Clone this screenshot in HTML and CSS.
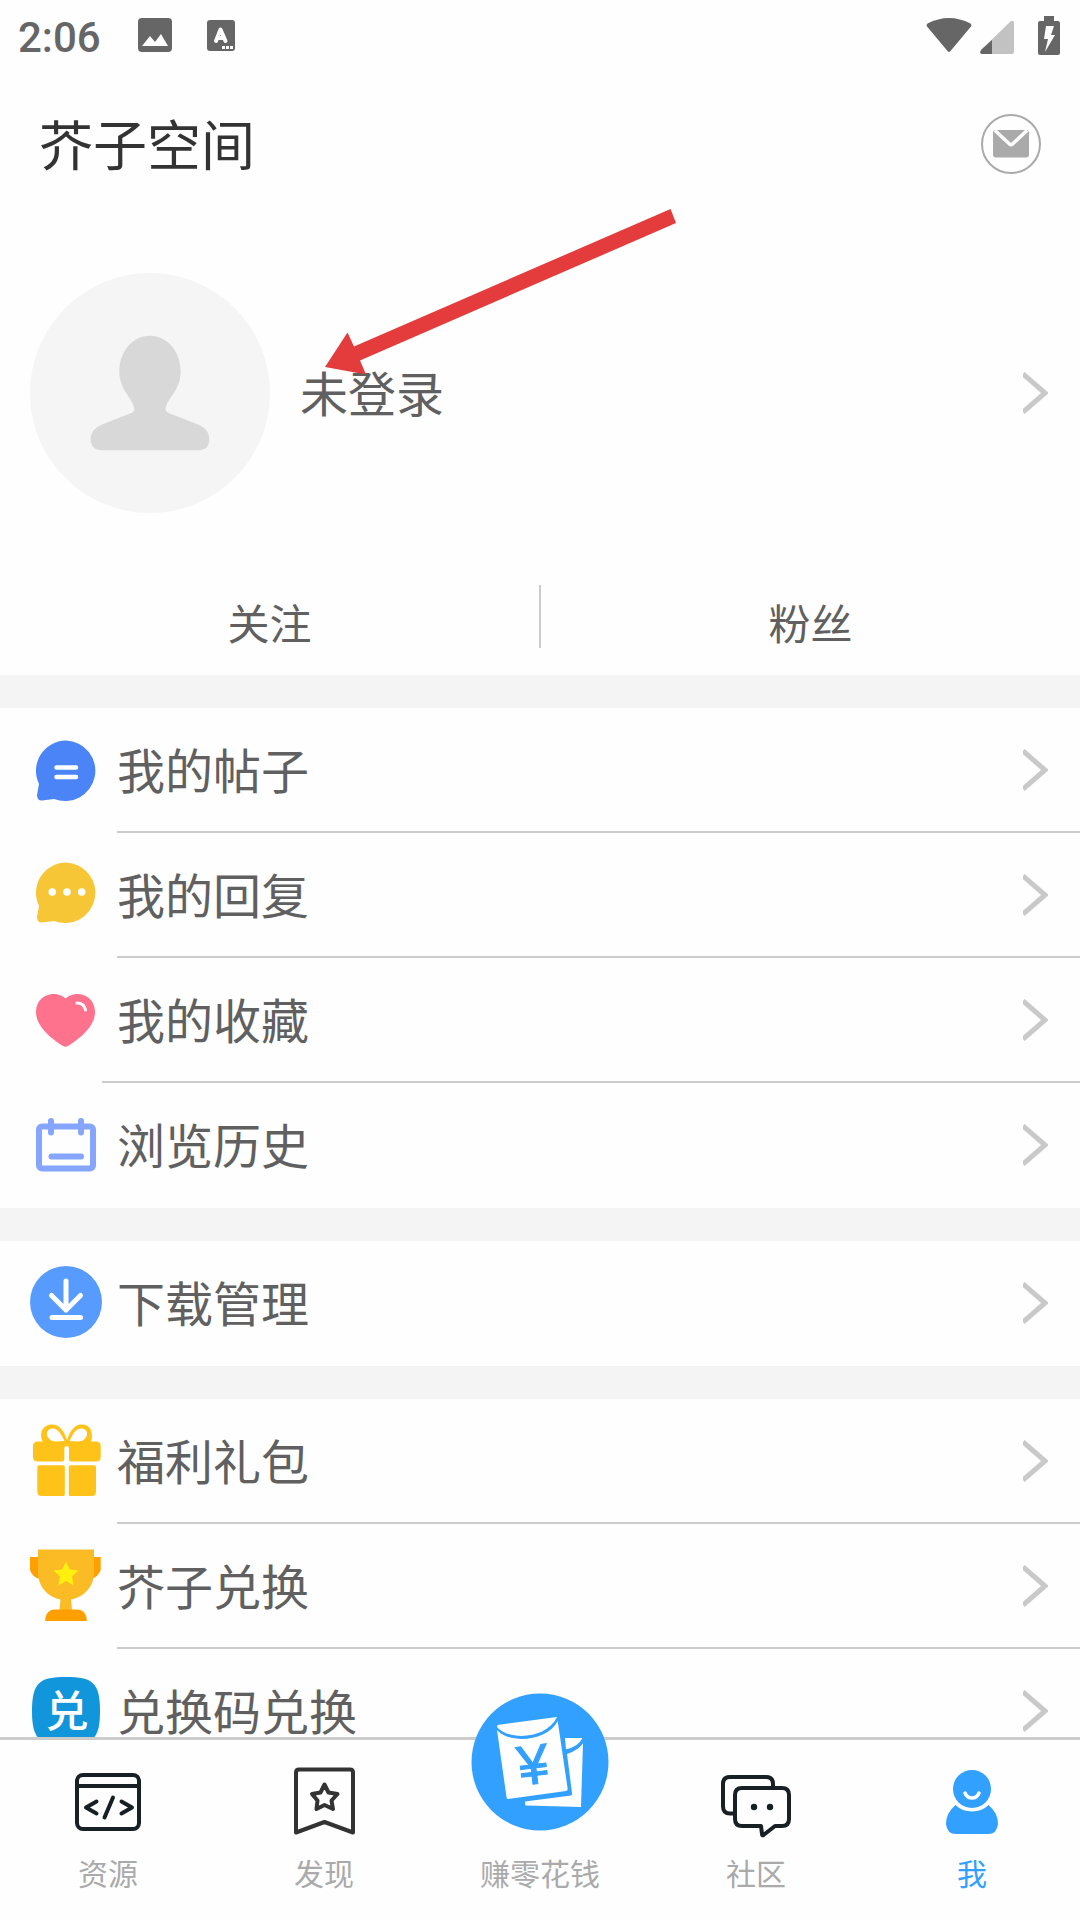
FILE: index.html
```html
<!DOCTYPE html>
<html lang="zh-CN">
<head>
<meta charset="utf-8">
<meta name="viewport" content="width=device-width, initial-scale=1">
<title>芥子空间</title>
<link rel="stylesheet" href="styles.css">
</head>
<body>
<svg class="defs" aria-hidden="true">
  <symbol id="chevron" viewBox="0 0 25 42"><path d="M0 2L22 21L0 40" fill="none" stroke="#c9c9c9" stroke-width="5"/></symbol>
  <symbol id="bubble" viewBox="0 0 72 72"><path d="M36 4.500A30.300 30.300 0 1 1 24 63L12 64.500Q7 64.500 7 59L9 48A30.300 30.300 0 0 1 36 4.500Z"/></symbol>
</svg>
<div class="app">
  <div class="status">
    <span class="status-time">2:06</span>
    <svg class="status-photo" width="34" height="34" viewBox="0 0 34 34"><rect width="34" height="34" rx="4" fill="#666"/><path d="M4 28L12 18L17 24L23 16L30 28Z" fill="#fefefe"/></svg>
    <svg class="status-input" width="28" height="31" viewBox="0 0 28 31"><rect width="28" height="31" rx="3" fill="#666"/><path d="M9 21L13.500 9.500L18.500 21M10.500 18H17" fill="none" stroke="#fefefe" stroke-width="4" stroke-linecap="round" stroke-linejoin="round"/><path d="M15 26h3v3h-3zM19 26h3v3h-3zM23 26h3v3h-3z" fill="#fefefe"/></svg>
    <svg class="status-wifi" width="46" height="39" viewBox="0 0 46 39"><path d="M1.500 7.500Q23-3.500 44.500 7.500Q46 9 45 10.500L24.500 35Q23 37 21.500 35L1 10.500Q0 9 1.500 7.500Z" fill="#666"/></svg>
    <svg class="status-signal" width="35" height="39" viewBox="0 0 35 39"><path d="M1 34L31 5Q34 4 34 7V36Q34 38 32 38H2Q-1 38 1 34Z" fill="#c2c2c2"/><path d="M12 24V38H2Q-1 38 1 34Z" fill="#666"/></svg>
    <svg width="22" height="39" viewBox="0 0 22 39"><path d="M6 0H16V5H20Q22 5 22 7V37Q22 39 20 39H2Q0 39 0 37V7Q0 5 2 5H6Z" fill="#666"/><path d="M8 10H16L13 19H17L7 36L10 23H6Z" fill="#fefefe"/></svg>
  </div>

  <header class="header">
    <h1 class="title">芥子空间</h1>
    <button class="mail" type="button" aria-label="消息">
      <svg width="60" height="60" viewBox="0 0 60 60"><circle cx="30" cy="30" r="29" fill="none" stroke="#aaa" stroke-width="2"/><rect x="12" y="16" width="36" height="27.500" rx="3" fill="#aaa"/><path d="M14 16.500L28.500 30Q30 31.500 31.500 30L46 16.500" fill="none" stroke="#fefefe" stroke-width="3.500"/></svg>
    </button>
  </header>

  <main class="content">
    <a class="profile" href="#profile">
      <svg width="240" height="240" viewBox="0 0 240 240"><circle cx="120" cy="120" r="120" fill="#f5f5f5"/><path d="M120 62.700C137 62.700 150.700 78 150.700 98.700C150.700 116 138 125 136 134C135 137 136 138.700 138 139.700L168 151.500C176 155 179.300 160 179.300 166Q179 177.300 168 177.300H72Q61 177.300 60.700 166C60.700 160 64 155 72 151.500L102 139.700C104 138.700 105 137 104 134C102 125 89.300 116 89.300 98.700C89.300 78 103 62.700 120 62.700Z" fill="#d8d8d8"/></svg>
      <span class="name">未登录</span>
      <svg class="chevron"><use href="#chevron"/></svg>
    </a>
    <div class="stats">
      <a class="stat" href="#following">关注</a>
      <span class="stat-line"></span>
      <a class="stat" href="#fans">粉丝</a>
    </div>

    <nav class="group">
      <a class="row" href="#posts">
        <svg class="icon" viewBox="0 0 72 72"><use href="#bubble" y="3" width="72" height="72" fill="#4b84f7"/><path d="M26.500 34.500H46M26.500 44H46" stroke="#fff" stroke-width="4.500" stroke-linecap="round"/></svg>
        <span class="row-body"><span class="label">我的帖子</span><svg class="chevron"><use href="#chevron"/></svg></span>
      </a>
      <a class="row" href="#replies">
        <svg class="icon" viewBox="0 0 72 72"><use href="#bubble" width="72" height="72" fill="#f7c637"/><g fill="#fff"><circle cx="22.300" cy="34" r="3.800"/><circle cx="37" cy="34" r="3.800"/><circle cx="51.700" cy="34" r="3.800"/></g></svg>
        <span class="row-body"><span class="label">我的回复</span><svg class="chevron"><use href="#chevron"/></svg></span>
      </a>
      <a class="row row-wide" href="#favorites">
        <svg class="icon" viewBox="0 0 72 72"><path d="M35.700 15.500C45 6.500 65 11 65 29C65 44 49 56 38 63Q35.700 64.500 33 63C22 56 6 44 6 29C6 11 26 6.500 35.700 15.500Z" fill="#ff728d"/><path d="M47 20Q54 20 55.500 27" fill="none" stroke="#fff" stroke-width="3" stroke-linecap="round"/></svg>
        <span class="row-body"><span class="label">我的收藏</span><svg class="chevron"><use href="#chevron"/></svg></span>
      </a>
      <a class="row" href="#history">
        <svg class="icon" viewBox="0 0 72 72"><g fill="none" stroke="#85a5ff" stroke-width="6" stroke-linecap="round"><rect x="9" y="18.500" width="54" height="42" rx="3"/><path d="M21 13V24.500M51 13V24.500M21.500 48.500H51"/></g></svg>
        <span class="row-body"><span class="label">浏览历史</span><svg class="chevron"><use href="#chevron"/></svg></span>
      </a>
    </nav>

    <nav class="group">
      <a class="row" href="#downloads">
        <svg class="icon" viewBox="0 0 72 72"><circle cx="36" cy="36" r="36" fill="#589bff"/><path d="M36 15V44M21.500 29.500L36 44L50.500 29.500M22 51.500H50.500" fill="none" stroke="#fff" stroke-width="5" stroke-linecap="round" stroke-linejoin="round"/></svg>
        <span class="row-body"><span class="label">下载管理</span><svg class="chevron"><use href="#chevron"/></svg></span>
      </a>
    </nav>

    <nav class="group">
      <a class="row" href="#gifts">
        <svg class="icon" viewBox="0 0 72 72"><g fill="#ffc219"><path d="M13 18C8 8 14 0 23 .5C31 1 35 10 37 16C39 10 43 1 51 .5C60 0 64 8 61 18L38 19Z"/><path d="M8 17.500H66Q70.700 17.500 70.700 22V33Q70.700 37.500 66 37.500H41Q39 37.500 39 35.500V24Q39 22 36.700 22Q34.300 22 34.300 24V35.500Q34.300 37.500 32 37.500H8Q3 37.500 3 33V22Q3 17.500 8 17.500Z"/><path d="M9 41.200H33Q34.800 41.200 34.800 43V70.500Q34.800 72 33 72H12Q7.300 72 7.300 67.500V43Q7.300 41.200 9 41.200ZM40.500 41.200H64Q66 41.200 66 43V67.500Q66 72 61.500 72H40.500Q38.800 72 38.800 70.500V43Q38.800 41.200 40.500 41.200Z"/></g><path d="M34.500 17C31 9 27 3.500 22 4.500C16 5.500 16 11 18.500 14Q21 17.500 26 17.500ZM39.500 17C43 9 47 3.500 52 4.500C58 5.500 58 11 55.500 14Q53 17.500 48 17.500Z" fill="#fefefe"/></svg>
        <span class="row-body"><span class="label">福利礼包</span><svg class="chevron"><use href="#chevron"/></svg></span>
      </a>
      <a class="row" href="#exchange">
        <svg class="icon" viewBox="0 0 72 72"><path d="M0 8H70.700V21Q68 28 61 30H10Q2 28 0 21Z" fill="#ffa000"/><path d="M8 .5H64V23C64 38 54 48 41 50.500L42 61H29.500L30.500 50.500C18 48 8 38 8 23Z" fill="#fabb24"/><path d="M15.300 72V69Q17 60.500 25 60.500H47Q55 60.500 56.700 69V72Z" fill="#ffa000"/><path d="M36 12.500L39.800 20.500L48.500 21.500L42 27.500L43.700 36.500L36 32L28.300 36.500L30 27.500L23.500 21.500L32.200 20.500Z" fill="#fff010"/></svg>
        <span class="row-body"><span class="label">芥子兑换</span><svg class="chevron"><use href="#chevron"/></svg></span>
      </a>
      <a class="row" href="#redeem">
        <svg class="icon" viewBox="0 0 72 72"><path d="M36 3C62 3 70 8 70 37S62 71 36 71S2 66 2 37S10 3 36 3Z" fill="#1296db"/><text class="icon-char" x="37" y="53" text-anchor="middle">兑</text></svg>
        <span class="row-body"><span class="label">兑换码兑换</span><svg class="chevron"><use href="#chevron"/></svg></span>
      </a>
    </nav>
  </main>

  <nav class="tabs">
    <a class="tab" href="#resources">
      <svg class="tab-icon" viewBox="0 0 72 76" fill="none" stroke="#172024" stroke-width="4" stroke-linecap="round" stroke-linejoin="round"><rect x="5" y="11" width="62" height="54" rx="6"/><path d="M5 22H67M24.500 37.500L14 43.500L24.500 49.500M49.500 37.500L60 43.500L49.500 49.500M41 33.500L32.500 53.500"/></svg>
      <span>资源</span>
    </a>
    <a class="tab" href="#discover">
      <svg class="tab-icon" viewBox="0 0 72 76" fill="none" stroke="#333" stroke-width="4" stroke-linecap="round" stroke-linejoin="round"><path d="M11 5.500H62Q65 5.500 65 8.500V68.500L36.500 58L8 68.500V8.500Q8 5.500 11 5.500Z"/><path d="M36.500 20.500L40.500 28.500L49.500 30L43.500 36.500L45 45L36.500 41L28.500 45L29.500 36.500L24 30L32.500 28.500Z"/></svg>
      <span>发现</span>
    </a>
    <a class="tab" href="#earn">
      <svg class="tab-badge" viewBox="0 0 138 138"><circle cx="69" cy="69" r="68.500" fill="#32a0ff"/><g fill="#fefefe"><path d="M26.500 32L86 24C76 46 38 48 26 34Z"/><path d="M26 37C38 51 76 49 86.700 28L96.700 96Q96.700 97.500 95 98L37 106Q35.700 106 35.500 104Z"/><path d="M94 45H111.500Q107 54 95 56.300Z"/><path d="M96 61Q108 57 112 50.300L110 114L55 112.500Q54 112.500 54 111V108.500L100 102.500Q101.300 102 101 100Z"/></g><text class="yen" x="62" y="91" text-anchor="middle" transform="rotate(-7 61 71)">¥</text></svg>
      <span>赚零花钱</span>
    </a>
    <a class="tab" href="#community">
      <svg class="tab-icon" viewBox="0 0 72 76" fill="none" stroke="#172024" stroke-width="4" stroke-linecap="round" stroke-linejoin="round"><path d="M13 49.500H10Q3 49.500 3 42.500V20Q3 13 10 13H46Q53 13 53 20V24"/><path d="M22 24H62Q69 24 69 31V55Q69 62 62 62H55L43.500 71Q42 72 42 70L41 62H22Q15 62 15 55V31Q15 24 22 24Z"/><g fill="#172024" stroke="none"><circle cx="34" cy="43" r="3.200"/><circle cx="50" cy="43" r="3.200"/></g></svg>
      <span>社区</span>
    </a>
    <a class="tab tab-active" href="#me">
      <svg class="tab-icon" viewBox="0 0 72 76"><circle cx="36" cy="25" r="19" fill="#32a0ff"/><path d="M29 29Q31 34 36 34T43 29" fill="none" stroke="#fefefe" stroke-width="3.500" stroke-linecap="round"/><path d="M19.500 41Q26 47.500 36 47.500T52.500 41Q62 49 62 60Q61 70 52 70H20Q11 70 10 60Q10 49 19.500 41Z" fill="#32a0ff"/></svg>
      <span>我</span>
    </a>
  </nav>

  <svg class="pointer" viewBox="0 0 352 166" aria-hidden="true"><path d="M0 158L22.500 123.500L29 137.500L345.500 0L351 14L35 151.500L41 165.500Z" fill="#e43c3c"/></svg>
</div>
</body>
</html>
```
FILE: styles.css
```css
* {
  box-sizing: border-box;
}

body {
  margin: 0;
  background: #fefefe;
  color: #606060;
  font-family: "Noto Sans CJK SC", "Noto Sans", sans-serif;
  font-size: 48px;
}

a {
  color: inherit;
  text-decoration: none;
}

svg {
  display: block;
  flex: none;
}

.defs {
  position: absolute;
  width: 0;
  height: 0;
}

.app {
  position: relative;
  display: flex;
  flex-direction: column;
  height: 100vh;
  overflow: hidden;
}

/* Status bar */
.status {
  flex: none;
  display: flex;
  align-items: center;
  height: 72px;
  padding: 0 20px 2px 18px;
}

.status-time {
  padding-top: 5px;
  color: #666;
  font: 500 42px/48px Roboto, sans-serif;
}

.status-photo {
  margin-left: 37px;
}

.status-input {
  margin-left: 35px;
}

.status-wifi {
  margin-left: auto;
}

.status-signal {
  margin: 0 23px 0 8px;
}

/* Title bar */
.header {
  flex: none;
  display: flex;
  align-items: center;
  justify-content: space-between;
  height: 144px;
  padding: 0 39px;
}

.title {
  margin: 0;
  padding-bottom: 2px;
  color: #333;
  font-size: 54px;
  font-weight: 400;
  line-height: 72px;
}

.mail {
  padding: 0;
  border: 0;
  background: none;
}

/* Scrolling content */
.content {
  flex: 1;
  min-height: 0;
  overflow-y: auto;
  scrollbar-width: none;
}

.profile {
  display: flex;
  align-items: center;
  gap: 30px;
  padding: 57px 32px 45px 30px;
}

.name {
  flex: 1;
  padding-bottom: 5px;
}

.chevron {
  width: 25px;
  height: 42px;
}

.stats {
  display: flex;
  align-items: center;
  height: 117px;
  font-size: 42px;
}

.stat {
  flex: 1;
  padding-top: 10px;
  text-align: center;
}

.stat-line {
  width: 2px;
  height: 63px;
  background: #ccc;
}

.group {
  border-top: 33px solid #f4f4f4;
}

.row {
  display: flex;
  align-items: stretch;
  height: 125px;
  padding-left: 30px;
}

.icon {
  align-self: center;
  width: 72px;
  height: 72px;
  margin-bottom: 3px;
}

.row-body {
  flex: 1;
  display: flex;
  align-items: center;
  justify-content: space-between;
  margin-left: 15px;
  padding-right: 32px;
  border-bottom: 2px solid #ccc;
}

.row-wide .row-body {
  margin-left: 0;
  padding-left: 15px;
}

.row:last-child .row-body {
  padding-bottom: 2px;
  border-bottom: 0;
}

.label {
  padding-bottom: 4px;
}

.icon-char {
  fill: #fff;
  font-size: 43px;
  font-weight: 500;
}

/* Bottom tabs */
.tabs {
  flex: none;
  display: flex;
  border-top: 3px solid #ccc;
  background: #fefefe;
}

.tab {
  flex: 1;
  display: flex;
  flex-direction: column;
  align-items: center;
  gap: 10px;
  padding: 24px 0 26px;
  color: #aaa;
  font-size: 30px;
  line-height: 44px;
}

.tab-active {
  color: #32a0ff;
}

.tab-icon {
  width: 72px;
  height: 76px;
}

.tab-badge {
  width: 138px;
  height: 138px;
  margin: -71px 0 9px;
}

.yen {
  fill: #32a0ff;
  stroke: #32a0ff;
  stroke-width: 1px;
  font-family: "Liberation Sans", sans-serif;
  font-size: 56px;
}

/* Arrow pointing at the login entry */
.pointer {
  position: absolute;
  top: 209px;
  left: 325px;
  width: 352px;
  height: 166px;
  pointer-events: none;
}
```
